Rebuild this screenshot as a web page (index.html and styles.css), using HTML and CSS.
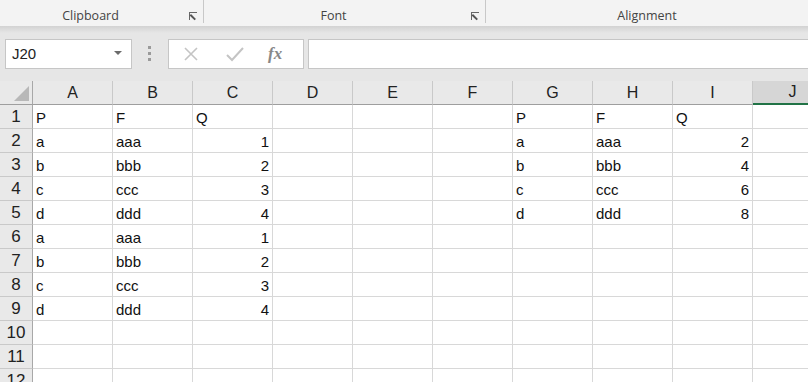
FILE: index.html
```html
<!DOCTYPE html>
<html>
<head>
  <meta charset='utf-8'>
  <title>Sheet1 - Excel</title>
  <link rel="stylesheet" href="styles.css">
</head>
<body>
  <div class='ribbon'>
    <div class='group g-clip'><span>Clipboard</span><i class='launch'></i></div>
    <div class='group g-font'><span>Font</span><i class='launch'></i></div>
    <div class='group g-align'><span>Alignment</span></div>
  </div>

  <div class='fbar'>
    <div class='namebox'>
      <span>J20</span>
      <svg class='caret' width='8' height='5' viewBox='0 0 8 5'><path d='M0 0h8L4 4z' fill='#6b6b6b'/></svg>
    </div>
    <div class='dots'><b></b><b></b><b></b></div>
    <div class='fbtns'>
      <svg width='16' height='16' viewBox='0 0 16 16'><path d='M2 2l12 12M14 2L2 14' stroke='#c4c4c4' stroke-width='1.6'/></svg>
      <svg width='18' height='16' viewBox='0 0 18 16'><path d='M1 9l5 5L17 2' stroke='#c4c4c4' stroke-width='2' fill='none'/></svg>
      <span class='fx'>fx</span>
    </div>
    <div class='finput'></div>
  </div>

  <div class='sheet' id='sheet'></div>

  <script>
const cols = ['A','B','C','D','E','F','G','H','I','J']
const data = {
  1: {A:'P', B:'F', C:'Q', G:'P', H:'F', I:'Q'},
  2: {A:'a', B:'aaa', C:1, G:'a', H:'aaa', I:2},
  3: {A:'b', B:'bbb', C:2, G:'b', H:'bbb', I:4},
  4: {A:'c', B:'ccc', C:3, G:'c', H:'ccc', I:6},
  5: {A:'d', B:'ddd', C:4, G:'d', H:'ddd', I:8},
  6: {A:'a', B:'aaa', C:1},
  7: {A:'b', B:'bbb', C:2},
  8: {A:'c', B:'ccc', C:3},
  9: {A:'d', B:'ddd', C:4}
}
const sheet = document.getElementById('sheet')

let html = "<div class='hd corner'><i></i></div>"
for (const c of cols) {
  html += `<div class='hd col${c === 'J' ? ' sel' : ''}'>${c}</div>`
}
for (let r = 1; r <= 12; r++) {
  html += `<div class='hd row'>${r}</div>`
  for (const c of cols) {
    const v = (data[r] || {})[c]
    if (v === undefined) html += "<div class='cell'></div>"
    else if (typeof v === 'number') html += `<div class='cell num'>${v}</div>`
    else html += `<div class='cell'>${v}</div>`
  }
}
sheet.innerHTML = html
  </script>
</body>
</html>
```

FILE: styles.css
```css
*{box-sizing: border-box;}

body {
  margin: 0;
  width: 808px;
  height: 382px;
  overflow: hidden;
  background-color: #e6e6e6;
  font-family: "Liberation Sans", Arial, sans-serif;
}

/* ribbon group labels */
.ribbon {
  display: flex;
  height: 26px;
  background-color: #f3f3f3;
}
.group {
  position: relative;
  display: flex;
  justify-content: center;
  align-items: center;
  padding-top: 8px;
  font: 12.5px "Open Sans", sans-serif;
  color: #444;
  border-right: 1px solid #c8c8c8;
  height: 23px;
}
.g-clip {width: 204px; padding-right: 22px;}
.g-font {width: 282px; padding-right: 22px;}
.g-align {width: 322px; border-right: none;}

.launch {
  position: absolute;
  right: 6px;
  top: 12px;
  width: 8px;
  height: 8px;
  border-left: 1px solid #666;
  border-top: 1px solid #666;
}
.launch::after {
  content: '';
  position: absolute;
  left: 1px;
  top: 1px;
  width: 7px;
  height: 1.5px;
  background: #555;
  transform-origin: 0 0;
  transform: rotate(45deg);
}

/* formula bar */
.fbar {
  display: flex;
  align-items: center;
  height: 55px;
  padding: 0 0 0 5px;
  background: linear-gradient(#d2d2d2, #e6e6e6 7px);
}
.namebox {
  display: flex;
  justify-content: space-between;
  align-items: center;
  width: 127px;
  height: 30px;
  padding: 0 9px 0 6px;
  background: #fff;
  border: 1px solid #c6c6c6;
  font-size: 15px;
  color: #222;
}
.dots {
  display: flex;
  flex-direction: column;
  gap: 3px;
  margin: 0 17px 0 16px;
}
.dots b {
  width: 3px;
  height: 3px;
  background: #9a9a9a;
}
.fbtns {
  display: flex;
  align-items: center;
  gap: 27px;
  width: 136px;
  height: 30px;
  padding-left: 14px;
  background: #fff;
  border: 1px solid #c6c6c6;
}
.fx {
  font: italic bold 17px "Liberation Serif", serif;
  color: #888;
  margin-left: -3px;
}
.finput {
  flex: 1;
  height: 30px;
  margin-left: 4px;
  background: #fff;
  border: 1px solid #c6c6c6;
  border-right: none;
}

/* grid */
.sheet {
  display: grid;
  grid-template-columns: 33px repeat(10, 80px);
  grid-auto-rows: 24px;
  background: #fff;
}
.hd {
  display: flex;
  align-items: center;
  justify-content: center;
  background: #e9e9e9;
  color: #222;
  font-size: 16px;
}
.col {
  border-right: 1px solid #c9c9c9;
  border-bottom: 1px solid #9e9e9e;
}
.col.sel {
  background: #d6d6d6;
  border-bottom: 2px solid #217346;
}
.row {
  border-right: 1px solid #a8a8a8;
  border-bottom: 1px solid #c9c9c9;
  font-size: 17px;
}
.corner {
  position: relative;
  border-right: 1px solid #a8a8a8;
  border-bottom: 1px solid #9e9e9e;
}
.corner i {
  position: absolute;
  right: 3px;
  bottom: 3px;
  border-left: 15px solid transparent;
  border-bottom: 15px solid #b8b8b8;
}
.cell {
  display: flex;
  align-items: center;
  padding: 1px 3px 0;
  border-right: 1px solid #d8d8d8;
  border-bottom: 1px solid #d8d8d8;
  font-size: 15px;
  color: #111;
}
.num {
  justify-content: flex-end;
}
```
